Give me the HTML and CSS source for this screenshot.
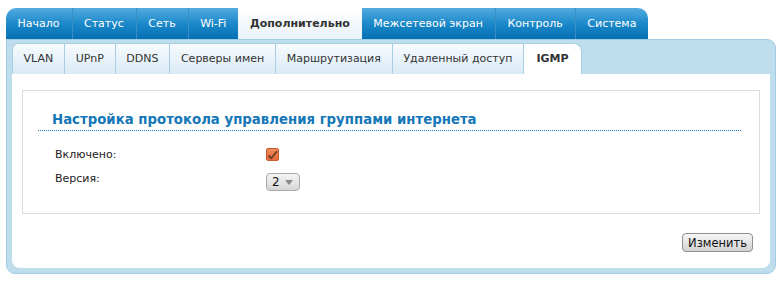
FILE: index.html
```html
<!DOCTYPE html>
<html lang="ru">
<head>
  <meta charset="UTF-8">
  <title>IGMP</title>
  <link rel="stylesheet" href="styles.css">
</head>
<body>
  <div class="page">
    <nav class="menu">
      <a href="#">Начало</a>
      <a href="#">Статус</a>
      <a href="#">Сеть</a>
      <a href="#">Wi-Fi</a>
      <a href="#" class="active">Дополнительно</a>
      <a href="#">Межсетевой экран</a>
      <a href="#">Контроль</a>
      <a href="#">Система</a>
    </nav>
    <div class="panel">
      <nav class="subtabs">
        <a href="#">VLAN</a>
        <a href="#">UPnP</a>
        <a href="#">DDNS</a>
        <a href="#">Серверы имен</a>
        <a href="#">Маршрутизация</a>
        <a href="#">Удаленный доступ</a>
        <a href="#" class="active">IGMP</a>
      </nav>
      <div class="content">
        <div class="box">
          <h2 class="title">Настройка протокола управления группами интернета</h2>
          <div class="form">
            <label>Включено:</label>
            <span class="check">
              <svg width="11" height="10" viewBox="0 0 11 10"><path d="M1.5 5.5 L4.3 8.2 L10 1.2" fill="none" stroke="#6b3a22" stroke-width="1.8"/></svg>
            </span>
            <label class="raised">Версия:</label>
            <span class="select">2 <i class="arrow"></i></span>
          </div>
        </div>
        <div class="actions">
          <button type="button">Изменить</button>
        </div>
      </div>
    </div>
  </div>
</body>
</html>
```

FILE: styles.css
```css
body {
  margin: 0;
  font-family: "DejaVu Sans", sans-serif;
  font-size: 11px;
  color: #222;
  background: #fff;
}
.page {
  padding: 8px 7px 0 6px;
}
.menu {
  display: flex;
  width: fit-content;
  height: 31px;
  border-radius: 10px 10px 0 0;
  overflow: hidden;
  background: linear-gradient(#52abe0, #1886c8 55%, #0671b3);
}
.menu a {
  padding: 0 12px 0 11.5px;
  line-height: 31px;
  color: #fff;
  text-decoration: none;
  border-left: 1px solid #3a8fc6;
}
.menu a:first-child {
  border-left: none;
}
.menu a.active {
  background: linear-gradient(#ffffff, #e9f2f8);
  color: #333;
  font-weight: bold;
  border-left: none;
}
.menu a.active + a {
  border-left: none;
}
.panel {
  background: #bedeee;
  border: 1px solid #a2cce4;
  border-radius: 0 9px 9px 9px;
  padding: 3px 5px 5px 5px;
}
.subtabs {
  display: flex;
  height: 31px;
}
.subtabs a {
  padding: 0 11px 0 10.5px;
  line-height: 30px;
  color: #333;
  text-decoration: none;
  background: linear-gradient(#f7fbfd, #d9eaf5);
  border: 1px solid #a8cee4;
  border-bottom: none;
  border-right: none;
}
.subtabs a:first-child {
  border-radius: 6px 0 0 0;
}
.subtabs a.active {
  background: #fff;
  font-weight: bold;
  border-right: 1px solid #a8cee4;
  border-radius: 0 8px 0 0;
  padding: 0 12px;
}
.content {
  background: #fff;
  border-radius: 0 0 8px 8px;
  padding: 16px 10px 16px 10px;
}
.box {
  border: 1px solid #dcdcdc;
  padding: 21px 18px 22px 15px;
}
.title {
  margin: 0;
  padding: 0 0 3px 14px;
  font-size: 13.3px;
  color: #1577b8;
  border-bottom: 1px dotted #1a77b2;
}
.form {
  display: grid;
  grid-template-columns: 211px auto;
  align-items: center;
  row-gap: 11px;
  padding: 17px 0 0 17px;
  justify-items: start;
}
.raised {
  margin-bottom: 6px;
}
.check {
  display: flex;
  align-items: center;
  justify-content: center;
  width: 11px;
  height: 11px;
  border: 1px solid #c7592a;
  border-radius: 2px;
  background: linear-gradient(#f08a5b, #e3693a);
}
.select {
  display: flex;
  align-items: center;
  gap: 5px;
  height: 16px;
  padding: 0 6px 0 5px;
  border: 1px solid #a9a9a9;
  border-radius: 4px;
  background: linear-gradient(#f4f4f4, #d6d6d6);
  font-size: 12px;
  color: #111;
}
.arrow {
  width: 0;
  height: 0;
  border-left: 4px solid transparent;
  border-right: 4px solid transparent;
  border-top: 5px solid #888;
  margin-top: 1px;
}
.actions {
  display: flex;
  justify-content: flex-end;
  padding: 19px 7px 0 0;
}
button {
  font-family: "DejaVu Sans", sans-serif;
  font-size: 11.5px;
  color: #111;
  height: 19px;
  padding: 0 5px;
  border: 1px solid #8f8f8f;
  border-radius: 4px;
  background: linear-gradient(#f6f6f6, #d3d3d3);
}
```
